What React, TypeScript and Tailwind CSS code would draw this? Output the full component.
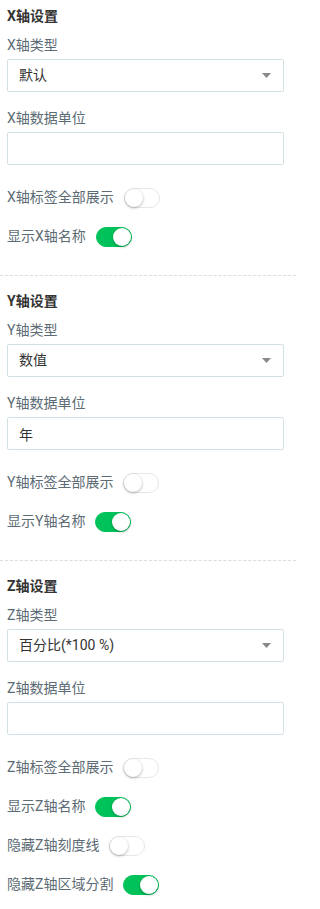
import React, { useState } from 'react';

type Toggle = { label: string; on: boolean };

interface AxisSection {
  axis: string;
  typeValue: string;
  unit: string;
  toggles: Toggle[];
}

const sections: AxisSection[] = [
  {
    axis: 'X',
    typeValue: '默认',
    unit: '',
    toggles: [
      { label: 'X轴标签全部展示', on: false },
      { label: '显示X轴名称', on: true },
    ],
  },
  {
    axis: 'Y',
    typeValue: '数值',
    unit: '年',
    toggles: [
      { label: 'Y轴标签全部展示', on: false },
      { label: '显示Y轴名称', on: true },
    ],
  },
  {
    axis: 'Z',
    typeValue: '百分比(*100 %)',
    unit: '',
    toggles: [
      { label: 'Z轴标签全部展示', on: false },
      { label: '显示Z轴名称', on: true },
      { label: '隐藏Z轴刻度线', on: false },
      { label: '隐藏Z轴区域分割', on: true },
    ],
  },
];

const Switch: React.FC<{ initial: boolean }> = ({ initial }) => {
  const [on, setOn] = useState(initial);
  return (
    <button
      onClick={() => setOn(!on)}
      className={`relative w-[36px] h-[20px] rounded-full border transition-colors ${
        on ? 'bg-[#00c25a] border-[#00c25a]' : 'bg-white border-[#e6e6e6]'
      }`}
    >
      <span
        className={`absolute top-[0px] w-[18px] h-[18px] rounded-full bg-white shadow-[0_1px_3px_rgba(0,0,0,0.3)] ${
          on ? 'left-[16px]' : 'left-[0px]'
        }`}
      />
    </button>
  );
};

const Section: React.FC<{ section: AxisSection; first: boolean }> = ({ section, first }) => {
  const [unit, setUnit] = useState(section.unit);
  return (
    <div className={`pl-[7px] pr-[12px] ${first ? '' : 'pt-[9px]'}`}>
      <div className="h-[32px] flex items-center text-[14px] font-bold text-[#333]">
        {section.axis}轴设置
      </div>
      <div className="h-[26px] flex items-center text-[14px] text-[#5c6b74]">{section.axis}轴类型</div>
      <div className="mt-px h-[33px] flex items-center justify-between border border-[#d3e0e6] rounded-[2px] pl-[11px] pr-[12px] text-[14px] text-[#333] cursor-pointer">
        <span>{section.typeValue}</span>
        <svg width="9" height="5" viewBox="0 0 9 5">
          <path d="M0 0 L9 0 L4.5 5 Z" fill="#888" />
        </svg>
      </div>
      <div className="mt-[13px] h-[26px] flex items-center text-[14px] text-[#5c6b74]">
        {section.axis}轴数据单位
      </div>
      <input
        value={unit}
        onChange={(e) => setUnit(e.target.value)}
        className="mt-px block w-full h-[33px] border border-[#d3e0e6] rounded-[2px] px-[11px] text-[14px] text-[#333] outline-none"
      />
      <div className="mt-[13px]">
        {section.toggles.map((t) => (
          <div key={t.label} className="h-[39px] flex items-center gap-[10px] text-[14px] text-[#5c6b74]">
            <span>{t.label}</span>
            <Switch initial={t.on} />
          </div>
        ))}
      </div>
    </div>
  );
};

export default function App() {
  return (
    <div
      className="w-[296px] bg-white"
      style={{ fontFamily: 'Roboto, "Noto Sans CJK SC", sans-serif' }}
    >
      {sections.map((s, i) => (
        <React.Fragment key={s.axis}>
          {i > 0 && <div className="mt-[19px] border-t border-dashed border-[#dcdcdc]" />}
          <Section section={s} first={i === 0} />
        </React.Fragment>
      ))}
    </div>
  );
}
